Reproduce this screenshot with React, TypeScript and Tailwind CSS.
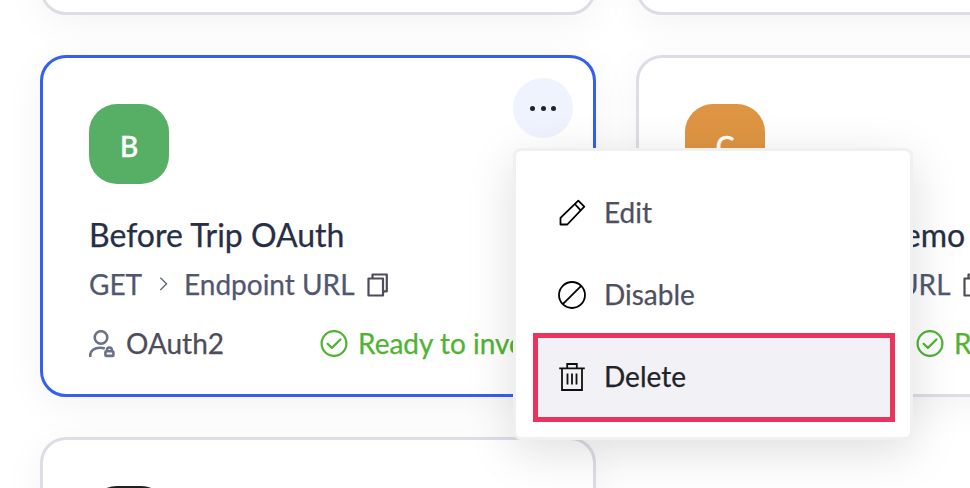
import type { ReactNode } from "react";
import clsx from "clsx";

type Integration = {
  initial: string;
  name: string;
  color: string;
  active?: boolean;
};

const integrations: Integration[] = [
  { initial: "B", name: "Before Trip OAuth", color: "bg-[#57af65]", active: true },
  { initial: "C", name: "Contact Auth Demo", color: "bg-[#de9543]" },
];

function ChevronIcon() {
  return (
    <svg width="8" height="14" viewBox="0 0 8 14" fill="none" stroke="currentColor" strokeWidth="1.2">
      <path d="M0.3 0.6 6.600 6.800 0.300 13" />
    </svg>
  );
}

function CopyIcon() {
  return (
    <svg className="mt-0.5" width="22" height="24" viewBox="0 0 22 24" fill="none" stroke="#4d4d59" strokeWidth="2.200" strokeLinejoin="round">
      <path d="M1.500 5.500h14.500v17H1.500z" />
      <path d="M5.500 5.500V1.500H19.800v16.800H16" />
    </svg>
  );
}

function UserLockIcon() {
  return (
    <svg className="mt-0.5 shrink-0" width="26" height="28" viewBox="0 0 26 28" fill="none" stroke="#6b7186" strokeWidth="2.600">
      <circle cx="12" cy="7.500" r="6.300" />
      <path d="M1.200 27v-1.500C1.200 20.700 5.500 17.700 11 17.700c2 0 3.500.3 4.800.8" />
      <rect x="16.400" y="21.300" width="8" height="4.600" rx="1" />
      <path d="M18 20.700v-.8a2.400 2.400 0 0 1 4.800 0v.8" />
    </svg>
  );
}

function CheckCircleIcon() {
  return (
    <svg className="mt-0.5" width="28" height="28" viewBox="0 0 28 28" fill="none" stroke="currentColor" strokeWidth="2.200">
      <circle cx="14" cy="13.500" r="12.400" />
      <path d="m7.600 13.800 4.300 4.100 8.500-8.400" strokeLinecap="round" strokeLinejoin="round" />
    </svg>
  );
}

function PencilIcon() {
  return (
    <svg width="28" height="28" viewBox="0 0 28 28" fill="none" stroke="#000" strokeWidth="1.800" strokeLinejoin="round">
      <path d="M2.500 25.500v-6.600L20.300 1.700l6 6L9.300 25.500z" />
      <path d="m16.800 5 5.600 6.200" />
    </svg>
  );
}

function DisableIcon() {
  return (
    <svg width="28" height="28" viewBox="0 0 28 28" fill="none" stroke="#000" strokeWidth="1.800">
      <circle cx="14" cy="14" r="13" />
      <path d="M4.800 23.200 23.200 4.800" />
    </svg>
  );
}

function TrashIcon() {
  return (
    <svg width="28" height="28" viewBox="0 0 28 28" fill="none" stroke="#10100c" strokeWidth="1.800">
      <path d="M1.200 5.300h25.600M9.200 5V1h9.600v4M4 5.300V27h20V5.300" />
      <path d="M9.500 10.500v11M14 10.500v11M18.500 10.500v11" />
    </svg>
  );
}

function MenuItem({ icon, label }: { icon: ReactNode; label: string }) {
  return (
    <button className="flex h-[82px] items-center gap-[18px] pl-[42px] text-left text-[#4f505f]">
      {icon}
      <span className="-mt-0.5">{label}</span>
    </button>
  );
}

function ContextMenu() {
  return (
    <div className="absolute left-[470px] top-[90px] z-10 flex h-[292px] w-[400px] flex-col rounded-lg border-[3px] border-[#f0f0f0] bg-white pt-[21px] text-[28px] shadow-[0_12px_48px_rgba(0,0,0,0.13)]">
      <MenuItem icon={<PencilIcon />} label="Edit" />
      <MenuItem icon={<DisableIcon />} label="Disable" />
      <button className="ml-[17px] -mt-[3px] flex h-[89px] w-[362px] items-center gap-[18px] border-[5px] border-[#ea335d] bg-[#f2f1f6] pb-0.5 pl-5 text-left text-[#222228]">
        <TrashIcon />
        <span className="-mt-0.5">Delete</span>
      </button>
    </div>
  );
}

function Avatar({ color, children }: { color: string; children?: ReactNode }) {
  return (
    <div className={clsx("flex size-20 items-center justify-center rounded-[28px] pt-1 text-[28px] font-medium text-white [-webkit-text-stroke:0.5px]", color)}>
      {children}
    </div>
  );
}

function Card({ active, children }: { active?: boolean; children?: ReactNode }) {
  return (
    <div
      className={clsx(
        "relative h-[342px] rounded-[26px] border-[3px] bg-white px-[46px] pt-[46px] shadow-[0_8px_40px_rgba(0,0,0,0.05)]",
        active ? "z-10 border-[#355ff0]" : "border-[#dddde6]"
      )}
    >
      {children}
    </div>
  );
}

function IntegrationCard({ initial, name, color, active }: Integration) {
  return (
    <Card active={active}>
      <Avatar color={color}>{initial}</Avatar>
      {active && (
        <button className="absolute right-5 top-5 flex size-[60px] items-center justify-center gap-[5.500px] rounded-full bg-[#eef3fe] pt-[1.500px]">
          <span className="size-[5px] rounded-full bg-[#222228]" />
          <span className="size-[5px] rounded-full bg-[#222228]" />
          <span className="size-[5px] rounded-full bg-[#222228]" />
        </button>
      )}

      <h2 className="mt-[31px] whitespace-nowrap text-[32px] leading-10 text-[#272f45]">{name}</h2>
      <div className="mt-3 flex h-[34px] items-center whitespace-nowrap text-[28px] text-[#505870]">
        <span className="w-[71px]">GET</span>
        <ChevronIcon />
        <span className="ml-4 w-[183px]">Endpoint URL</span>
        <CopyIcon />
      </div>
      <div className="mt-[25px] flex h-[34px] items-center whitespace-nowrap text-[28px]">
        <UserLockIcon />
        <span className="ml-[11px] w-[194px] shrink-0 text-[#4d4d59]">OAuth2</span>
        <span className="flex shrink-0 items-center gap-2.5 text-[#4fb333]">
          <CheckCircleIcon />
          Ready to invoke
        </span>
      </div>
      {active && <ContextMenu />}
    </Card>
  );
}

export default function App() {
  return (
    <div className="h-screen overflow-hidden bg-white font-['Lato',sans-serif] [-webkit-text-stroke:0.25px]">
      <div className="-mt-[327px] ml-10 grid w-[1152px] grid-cols-2 gap-10">
        <Card />
        <Card />
        {integrations.map((item) => (
          <IntegrationCard key={item.name} {...item} />
        ))}
        <Card>
          <Avatar color="bg-[#1f1f24]" />
        </Card>
      </div>
    </div>
  );
}
